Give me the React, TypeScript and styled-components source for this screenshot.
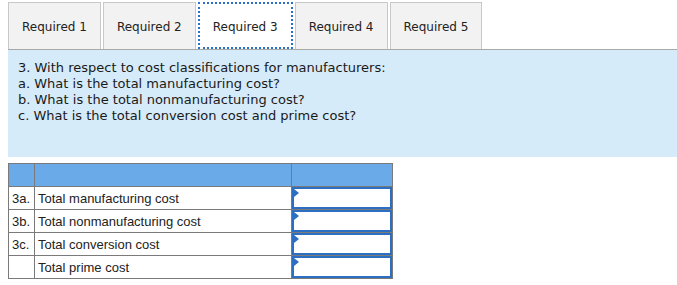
import React, { useState } from 'react'
import styled, { createGlobalStyle } from 'styled-components'

const GlobalStyle = createGlobalStyle`
    body {
        margin: 0;
        background: #ffffff;
        font-family: "DejaVu Sans", Verdana, sans-serif;
    }
`

const Page = styled.div`
    padding: 2px 0 0 8px;
`

const TabBar = styled.div`
    display: flex;
    gap: 2px;
    align-items: flex-end;
`

const Tab = styled.button<{ active: boolean }>`
    height: 47px;
    padding: 2px 13px 0;
    font-family: "DejaVu Sans", Verdana, sans-serif;
    font-size: 12px;
    color: #222;
    background: ${({ active }) => (active ? '#ffffff' : '#f2f2f2')};
    border: ${({ active }) => (active ? '2px dotted #2a6fc9' : '1px solid #c8c8c8')};
    border-bottom: ${({ active }) => (active ? '2px dotted #2a6fc9' : 'none')};
    cursor: pointer;
`

const Panel = styled.div`
    background: #d6ebf9;
    border-top: 1px solid #a9a9a9;
    padding: 10px 10px 0;
    height: 97px;
    font-size: 13px;
    color: #1a1a1a;
    line-height: 16px;
`

const Question = styled.p`
    margin: 0;
`

const Table = styled.table`
    margin-top: 6px;
    border-collapse: collapse;
    font-family: "Liberation Sans", Arial, sans-serif;
    font-size: 13px;
    line-height: 15px;
    color: #222;
`

const HeadCell = styled.th<{ w: number }>`
    background: #6aaae9;
    border: 1px solid #7a7a7a;
    height: 22px;
    width: ${({ w }) => w}px;
    padding: 0;
`

const Cell = styled.td`
    border: 1px solid #7a7a7a;
    height: 22px;
    padding: 0 3px;
    white-space: nowrap;
`

const InputCell = styled.td`
    border: 1px solid #7a7a7a;
    padding: 0;
    position: relative;
`

const Input = styled.input`
    display: block;
    box-sizing: border-box;
    width: 100%;
    height: 22px;
    border: 2px solid #2c6fc2;
    outline: none;
    font-size: 12px;
`

const Marker = styled.span`
    position: absolute;
    left: 2px;
    top: 2px;
    width: 0;
    height: 0;
    border-top: 4px solid transparent;
    border-bottom: 4px solid transparent;
    border-left: 5px solid #2c6fc2;
`

const rows = [
    { label: '3a.', text: 'Total manufacturing cost' },
    { label: '3b.', text: 'Total nonmanufacturing cost' },
    { label: '3c.', text: 'Total conversion cost' },
    { label: '', text: 'Total prime cost' },
]

const App: React.FunctionComponent = () => {
    const [active, setActive] = useState(3)
    return (
        <>
            <GlobalStyle />
            <Page>
                <TabBar>
                    {[1, 2, 3, 4, 5].map(n => (
                        <Tab key={n} active={active === n} onClick={() => setActive(n)}>
                            Required {n}
                        </Tab>
                    ))}
                </TabBar>
                <Panel>
                    <Question>3. With respect to cost classifications for manufacturers:</Question>
                    <Question>a. What is the total manufacturing cost?</Question>
                    <Question>b. What is the total nonmanufacturing cost?</Question>
                    <Question>c. What is the total conversion cost and prime cost?</Question>
                </Panel>
                <Table>
                    <thead>
                        <tr>
                            <HeadCell w={25} />
                            <HeadCell w={256} />
                            <HeadCell w={100} />
                        </tr>
                    </thead>
                    <tbody>
                        {rows.map((row, index) => (
                            <tr key={index}>
                                <Cell>{row.label}</Cell>
                                <Cell>{row.text}</Cell>
                                <InputCell>
                                    <Input />
                                    <Marker />
                                </InputCell>
                            </tr>
                        ))}
                    </tbody>
                </Table>
            </Page>
        </>
    )
}

export default App
